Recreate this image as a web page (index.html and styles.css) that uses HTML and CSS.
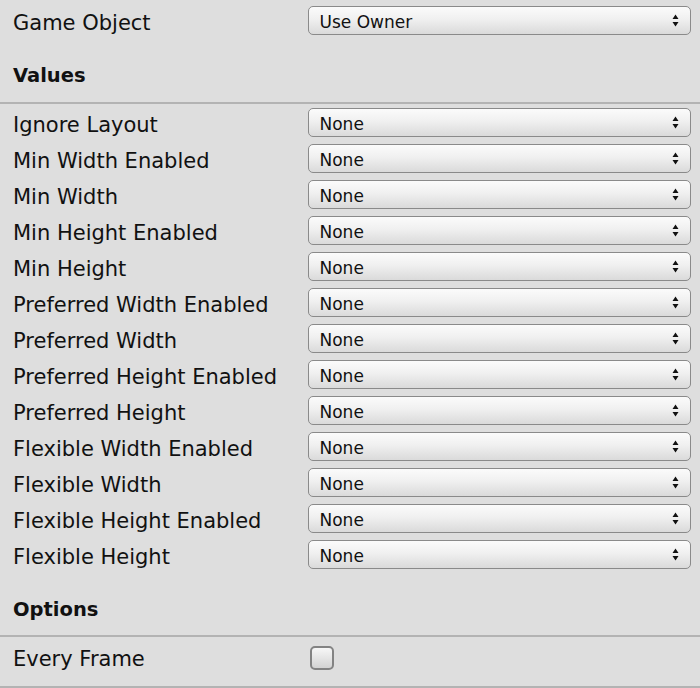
FILE: index.html
```html
<!DOCTYPE html>
<html>
<head>
<meta charset="utf-8">
<link rel="stylesheet" href="styles.css">
</head>
<body>
<div class="panel">
  <div class="row row-top">
    <div class="label">Game Object</div>
    <div class="select"><span class="value">Use Owner</span><span class="arrows"><svg width="7" height="13" viewBox="0 0 7 13"><path d="M3.5 0.5 L6.5 5 L0.5 5 Z M3.5 12.5 L6.5 8 L0.5 8 Z" fill="#111"/></svg></span></div>
  </div>
  <div class="header">Values</div>
  <div class="list">
    <div class="row"><div class="label">Ignore Layout</div><div class="select"><span class="value">None</span><span class="arrows"><svg width="7" height="13" viewBox="0 0 7 13"><path d="M3.5 0.5 L6.5 5 L0.5 5 Z M3.5 12.5 L6.5 8 L0.5 8 Z" fill="#111"/></svg></span></div></div>
    <div class="row"><div class="label">Min Width Enabled</div><div class="select"><span class="value">None</span><span class="arrows"><svg width="7" height="13" viewBox="0 0 7 13"><path d="M3.5 0.5 L6.5 5 L0.5 5 Z M3.5 12.5 L6.5 8 L0.5 8 Z" fill="#111"/></svg></span></div></div>
    <div class="row"><div class="label">Min Width</div><div class="select"><span class="value">None</span><span class="arrows"><svg width="7" height="13" viewBox="0 0 7 13"><path d="M3.5 0.5 L6.5 5 L0.5 5 Z M3.5 12.5 L6.5 8 L0.5 8 Z" fill="#111"/></svg></span></div></div>
    <div class="row"><div class="label">Min Height Enabled</div><div class="select"><span class="value">None</span><span class="arrows"><svg width="7" height="13" viewBox="0 0 7 13"><path d="M3.5 0.5 L6.5 5 L0.5 5 Z M3.5 12.5 L6.5 8 L0.5 8 Z" fill="#111"/></svg></span></div></div>
    <div class="row"><div class="label">Min Height</div><div class="select"><span class="value">None</span><span class="arrows"><svg width="7" height="13" viewBox="0 0 7 13"><path d="M3.5 0.5 L6.5 5 L0.5 5 Z M3.5 12.5 L6.5 8 L0.5 8 Z" fill="#111"/></svg></span></div></div>
    <div class="row"><div class="label">Preferred Width Enabled</div><div class="select"><span class="value">None</span><span class="arrows"><svg width="7" height="13" viewBox="0 0 7 13"><path d="M3.5 0.5 L6.5 5 L0.5 5 Z M3.5 12.5 L6.5 8 L0.5 8 Z" fill="#111"/></svg></span></div></div>
    <div class="row"><div class="label">Preferred Width</div><div class="select"><span class="value">None</span><span class="arrows"><svg width="7" height="13" viewBox="0 0 7 13"><path d="M3.5 0.5 L6.5 5 L0.5 5 Z M3.5 12.5 L6.5 8 L0.5 8 Z" fill="#111"/></svg></span></div></div>
    <div class="row"><div class="label">Preferred Height Enabled</div><div class="select"><span class="value">None</span><span class="arrows"><svg width="7" height="13" viewBox="0 0 7 13"><path d="M3.5 0.5 L6.5 5 L0.5 5 Z M3.5 12.5 L6.5 8 L0.5 8 Z" fill="#111"/></svg></span></div></div>
    <div class="row"><div class="label">Preferred Height</div><div class="select"><span class="value">None</span><span class="arrows"><svg width="7" height="13" viewBox="0 0 7 13"><path d="M3.5 0.5 L6.5 5 L0.5 5 Z M3.5 12.5 L6.5 8 L0.5 8 Z" fill="#111"/></svg></span></div></div>
    <div class="row"><div class="label">Flexible Width Enabled</div><div class="select"><span class="value">None</span><span class="arrows"><svg width="7" height="13" viewBox="0 0 7 13"><path d="M3.5 0.5 L6.5 5 L0.5 5 Z M3.5 12.5 L6.5 8 L0.5 8 Z" fill="#111"/></svg></span></div></div>
    <div class="row"><div class="label">Flexible Width</div><div class="select"><span class="value">None</span><span class="arrows"><svg width="7" height="13" viewBox="0 0 7 13"><path d="M3.5 0.5 L6.5 5 L0.5 5 Z M3.5 12.5 L6.5 8 L0.5 8 Z" fill="#111"/></svg></span></div></div>
    <div class="row"><div class="label">Flexible Height Enabled</div><div class="select"><span class="value">None</span><span class="arrows"><svg width="7" height="13" viewBox="0 0 7 13"><path d="M3.5 0.5 L6.5 5 L0.5 5 Z M3.5 12.5 L6.5 8 L0.5 8 Z" fill="#111"/></svg></span></div></div>
    <div class="row"><div class="label">Flexible Height</div><div class="select"><span class="value">None</span><span class="arrows"><svg width="7" height="13" viewBox="0 0 7 13"><path d="M3.5 0.5 L6.5 5 L0.5 5 Z M3.5 12.5 L6.5 8 L0.5 8 Z" fill="#111"/></svg></span></div></div>
  </div>
  <div class="header header-options">Options</div>
  <div class="row row-check">
    <div class="label">Every Frame</div>
    <div class="checkbox"></div>
  </div>
</div>
</body>
</html>
```
FILE: styles.css
```css
html, body {
  margin: 0;
  padding: 0;
  background: #dedede;
}
body {
  font-family: "DejaVu Sans", sans-serif;
  color: #111;
  width: 700px;
  height: 688px;
  overflow: hidden;
}
.panel {
  display: flex;
  flex-direction: column;
}
.row {
  display: grid;
  grid-template-columns: 308px 1fr;
  align-items: center;
  padding-right: 9px;
  height: 36px;
  box-sizing: border-box;
  padding-top: 4px;
  padding-bottom: 3px;
}
.row-top {
  height: 39px;
  padding-top: 6px;
  padding-bottom: 4px;
}
.label {
  padding-left: 13px;
  padding-top: 4px;
  font-size: 21px;
  line-height: 24px;
  white-space: nowrap;
}
.select {
  height: 29px;
  box-sizing: border-box;
  border: 1.5px solid #8a8a8a;
  border-radius: 5px;
  background: linear-gradient(#fbfbfb, #f0f0f0 45%, #dadada);
  display: flex;
  align-items: center;
  justify-content: space-between;
  padding-left: 10.5px;
  padding-right: 11px;
  font-size: 17px;
}
.value {
  padding-top: 3px;
  line-height: 20px;
}
.arrows {
  display: flex;
  align-items: center;
}
.arrows svg {
  display: block;
}
.header {
  height: 65px;
  box-sizing: border-box;
  border-bottom: 2px solid #b3b3b3;
  padding-left: 13px;
  padding-top: 25px;
  line-height: 24px;
  font-size: 19.5px;
  font-weight: bold;
}
.header-options {
  padding-top: 26px;
}
.row-check {
  height: 51px;
  padding-top: 9px;
  padding-bottom: 0;
  align-items: start;
  border-bottom: 2px solid #b3b3b3;
}
.row-check .label {
  padding-top: 1px;
}
.checkbox {
  margin-left: 2px;
  width: 24px;
  height: 24px;
  box-sizing: border-box;
  border: 2px solid #838383;
  border-radius: 5px;
  background: linear-gradient(#f7f7f7, #d3d3d3);
}
```
